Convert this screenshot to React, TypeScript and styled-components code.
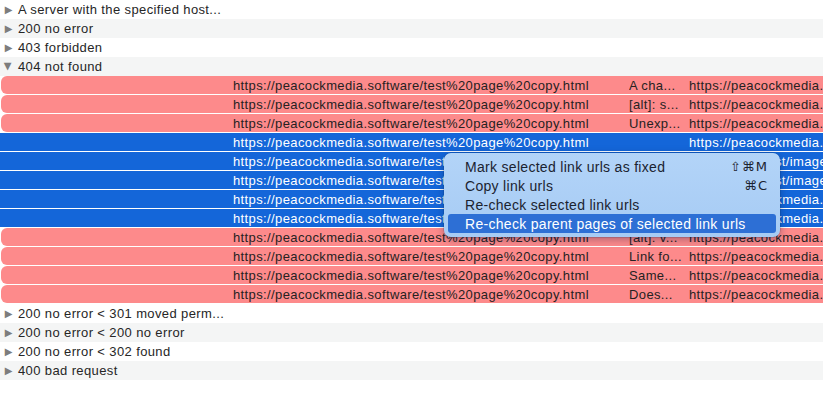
import React from "react";
import styled, { createGlobalStyle } from "styled-components";

const Global = createGlobalStyle`
  html, body {
    margin: 0;
    padding: 0;
    background: #ffffff;
    overflow: hidden;
  }
  body {
    font-family: "Liberation Sans", Arial, "DejaVu Sans", sans-serif;
    font-size: 13px;
    letter-spacing: 0.38px;
    color: #262626;
  }
`;

type Kind = "group" | "error" | "selected";

interface Row {
  kind: Kind;
  label?: string;
  open?: boolean;
  note?: string;
  target?: string;
}

const PAGE = "https://peacockmedia.software/test%20page%20copy.html";
const SITE = "https://peacockmedia.software/index.html";

const rows: Row[] = [
  { kind: "group", label: "A server with the specified host..." },
  { kind: "group", label: "200 no error" },
  { kind: "group", label: "403 forbidden" },
  { kind: "group", label: "404 not found", open: true },
  { kind: "error", note: "A cha...", target: SITE },
  { kind: "error", note: "[alt]: s...", target: SITE },
  { kind: "error", note: "Unexp...", target: SITE },
  { kind: "selected", note: "", target: SITE },
  { kind: "selected", note: "", target: "https://localhost/image.png" },
  { kind: "selected", note: "", target: "https://localhost/image6.jpg" },
  { kind: "selected", note: "", target: SITE },
  { kind: "selected", note: "", target: SITE },
  { kind: "error", note: "[alt]: v...", target: SITE },
  { kind: "error", note: "Link fo...", target: SITE },
  { kind: "error", note: "Same...", target: SITE },
  { kind: "error", note: "Does...", target: SITE },
  { kind: "group", label: "200 no error < 301 moved perm..." },
  { kind: "group", label: "200 no error < 200 no error" },
  { kind: "group", label: "200 no error < 302 found" },
  { kind: "group", label: "400 bad request" },
  { kind: "group", label: "" },
];

const menuItems = [
  { label: "Mark selected link urls as fixed", key: "⇧⌘M" },
  { label: "Copy link urls", key: "⌘C" },
  { label: "Re-check selected link urls", key: "" },
  { label: "Re-check parent pages of selected link urls", key: "", active: true },
];

const App: React.FC = () => {
  return (
    <>
      <Global />
      <Outline>
        {rows.map((r, i) =>
          r.kind === "group" ? (
            <GroupRow key={i} $odd={i % 2 === 1}>
              {r.label && <Disclosure $open={!!r.open}>▶</Disclosure>}
              <GroupLabel>{r.label}</GroupLabel>
            </GroupRow>
          ) : (
            <DataRow key={i} $kind={r.kind}>
              <Cell />
              <Cell>{PAGE}</Cell>
              <Cell>{r.note}</Cell>
              <Cell>{r.target}</Cell>
            </DataRow>
          )
        )}
        <Menu>
          {menuItems.map((m) => (
            <MenuItem key={m.label} $active={!!m.active}>
              <span>{m.label}</span>
              <Shortcut>{m.key}</Shortcut>
            </MenuItem>
          ))}
        </Menu>
      </Outline>
    </>
  );
};

export default App;

const Outline = styled.div`
  position: relative;
  width: 823px;
  height: 393px;
  overflow: hidden;
`;

const GroupRow = styled.div<{ $odd: boolean }>`
  height: 19px;
  display: flex;
  align-items: center;
  padding-left: 3px;
  background: ${(p) => (p.$odd ? "#f4f5f5" : "#ffffff")};
  white-space: nowrap;
`;

const Disclosure = styled.span<{ $open: boolean }>`
  display: inline-block;
  width: 11px;
  margin-right: 4px;
  font-size: 10px;
  letter-spacing: 0;
  color: #7d7d7d;
  font-family: "DejaVu Sans", sans-serif;
  transform: ${(p) => (p.$open ? "rotate(90deg)" : "none")};
  text-align: center;
`;

const GroupLabel = styled.span`
  color: #262626;
`;

const DataRow = styled.div<{ $kind: Kind }>`
  height: 18px;
  margin-bottom: 1px;
  margin-left: ${(p) => (p.$kind === "error" ? "1px" : "0")};
  display: grid;
  grid-template-columns: ${(p) => (p.$kind === "error" ? "232px" : "233px")} 396px 60px 1fr;
  align-items: center;
  border-radius: ${(p) => (p.$kind === "error" ? "6px 0 0 6px" : "0")};
  background: ${(p) => (p.$kind === "error" ? "#fd8a8b" : "#1466d9")};
  color: ${(p) => (p.$kind === "error" ? "#262222" : "#ffffff")};
  white-space: nowrap;
`;

const Cell = styled.div`
  overflow: hidden;
  white-space: nowrap;
`;

const Menu = styled.div`
  position: absolute;
  left: 444px;
  top: 153px;
  width: 336px;
  padding: 4px 0 4px;
  box-sizing: border-box;
  border-radius: 7px;
  background: linear-gradient(180deg, #b3d4f8 0%, #a6cbf4 100%);
  box-shadow: 0 2px 8px rgba(0, 20, 60, 0.35), 0 0 0 0.5px rgba(0, 30, 80, 0.25);
`;

const MenuItem = styled.div<{ $active: boolean }>`
  height: 19px;
  margin: 0 4px;
  padding: 0 8px 0 17px;
  display: flex;
  align-items: center;
  justify-content: space-between;
  border-radius: 3px;
  font-size: 14px;
  letter-spacing: 0.3px;
  background: ${(p) => (p.$active ? "#2d6fd5" : "transparent")};
  color: ${(p) => (p.$active ? "#ffffff" : "#1b2330")};
`;

const Shortcut = styled.span`
  font-family: "DejaVu Sans", "Liberation Sans", sans-serif;
  font-size: 13px;
  letter-spacing: 1px;
`;
